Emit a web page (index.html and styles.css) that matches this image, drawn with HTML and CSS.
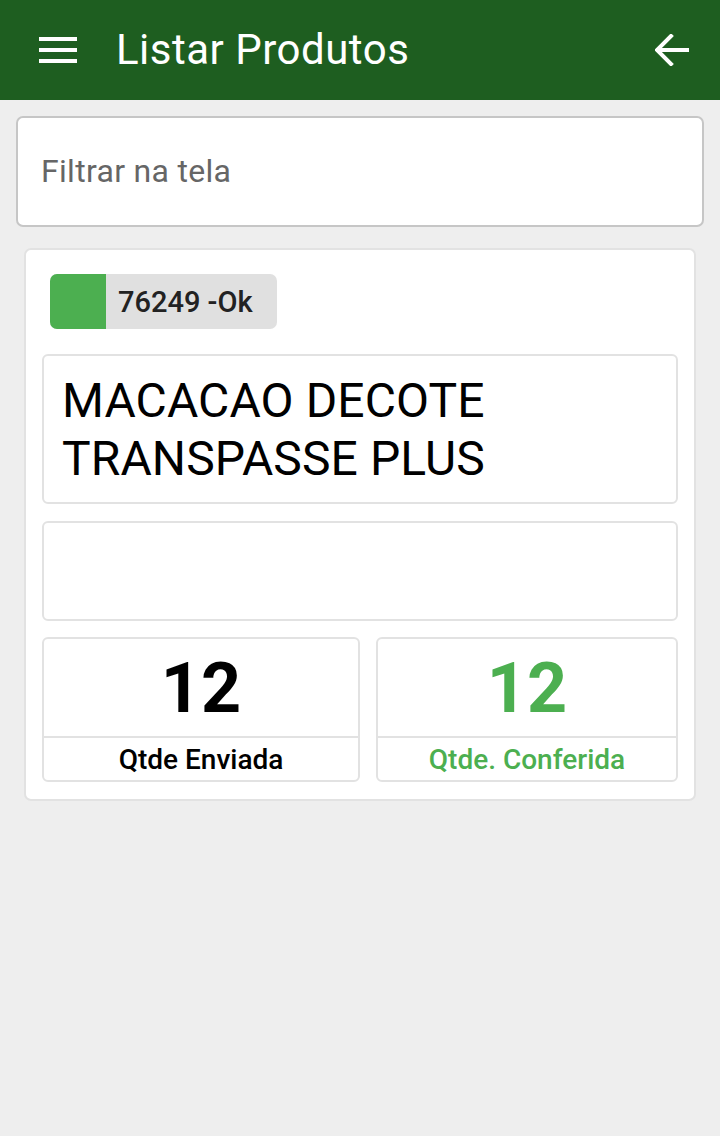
FILE: index.html
```html
<!DOCTYPE html>
<html lang="pt">
<head>
<meta charset="utf-8">
<title>Listar Produtos</title>
<link rel="stylesheet" href="styles.css">
</head>
<body>
<header class="appbar">
  <svg class="menu-icon" width="38" height="26" viewBox="0 0 38 26">
    <rect x="0" y="0" width="38" height="4" fill="#fff"/>
    <rect x="0" y="11" width="38" height="4" fill="#fff"/>
    <rect x="0" y="22" width="38" height="4" fill="#fff"/>
  </svg>
  <h1 class="title">Listar Produtos</h1>
  <svg class="back-icon" width="34" height="32" viewBox="0 0 34 32">
    <path d="M33 16 H3 M16 2 L2 16 L16 30" fill="none" stroke="#fff" stroke-width="4" stroke-linecap="square"/>
  </svg>
</header>
<main class="content">
  <div class="search">Filtrar na tela</div>
  <section class="card">
    <div class="badge"><span class="badge-color"></span><span class="badge-text">76249 -Ok</span></div>
    <div class="box name">MACACAO DECOTE<br>TRANSPASSE PLUS</div>
    <div class="box empty"></div>
    <div class="stats">
      <div class="stat">
        <div class="stat-num">12</div>
        <div class="stat-label">Qtde Enviada</div>
      </div>
      <div class="stat green">
        <div class="stat-num">12</div>
        <div class="stat-label">Qtde. Conferida</div>
      </div>
    </div>
  </section>
</main>
</body>
</html>
```
FILE: styles.css
```css
* { box-sizing: border-box; }
html, body { margin: 0; padding: 0; }
body {
  background: #eeeeee;
  font-family: Roboto, "Liberation Sans", sans-serif;
  width: 720px;
  height: 1136px;
}
.appbar {
  height: 100px;
  background: #1e5e20;
  display: flex;
  align-items: center;
  padding: 0 31px 0 39px;
}
.menu-icon { display: block; margin-top: -1px; }
.title {
  margin: -2px 0 0 39px;
  font-weight: 400;
  font-size: 42px;
  color: #fff;
  letter-spacing: 0.5px;
  flex: 1;
}
.back-icon { display: block; margin-top: -1px; }
.content { padding: 16px 16px 0 16px; }
.search {
  height: 111px;
  background: #fff;
  border: 2px solid #c6c6c6;
  border-radius: 7px;
  display: flex;
  align-items: center;
  padding-left: 23px;
  padding-bottom: 1px;
  font-size: 32px;
  color: #666;
  letter-spacing: 0.3px;
}
.card {
  margin: 21px 8px 0 8px;
  background: #fff;
  border: 2px solid #e2e2e2;
  border-radius: 7px;
  padding: 24px 16px 17px 16px;
}
.badge {
  display: flex;
  height: 55px;
  width: 227px;
  background: #e0e0e0;
  border-radius: 7px;
  overflow: hidden;
  margin-left: 8px;
  align-items: center;
}
.badge-color {
  width: 56px;
  height: 100%;
  background: #4caf50;
}
.badge-text {
  margin-left: 12px;
  font-size: 29px;
  font-weight: 500;
  color: #222;
}
.box {
  border: 2px solid #e2e2e2;
  border-radius: 6px;
  background: #fff;
}
.name {
  margin-top: 25px;
  height: 150px;
  padding: 16px 18px 0 18px;
  font-size: 48px;
  line-height: 58px;
  color: #000;
  letter-spacing: 0.1px;
}
.empty {
  margin-top: 17px;
  height: 100px;
}
.stats {
  display: grid;
  grid-template-columns: 318px 302px;
  gap: 16px;
  margin-top: 16px;
}
.stat {
  border: 2px solid #e2e2e2;
  border-radius: 6px;
  height: 145px;
  display: flex;
  flex-direction: column;
}
.stat-num {
  height: 99px;
  border-bottom: 2px solid #e2e2e2;
  display: flex;
  align-items: center;
  justify-content: center;
  font-size: 70px;
  font-weight: 700;
  color: #000;
}
.stat-label {
  flex: 1;
  display: flex;
  align-items: center;
  justify-content: center;
  font-size: 28px;
  font-weight: 500;
  color: #000;
}
.green .stat-num, .green .stat-label { color: #4caf50; }
```
